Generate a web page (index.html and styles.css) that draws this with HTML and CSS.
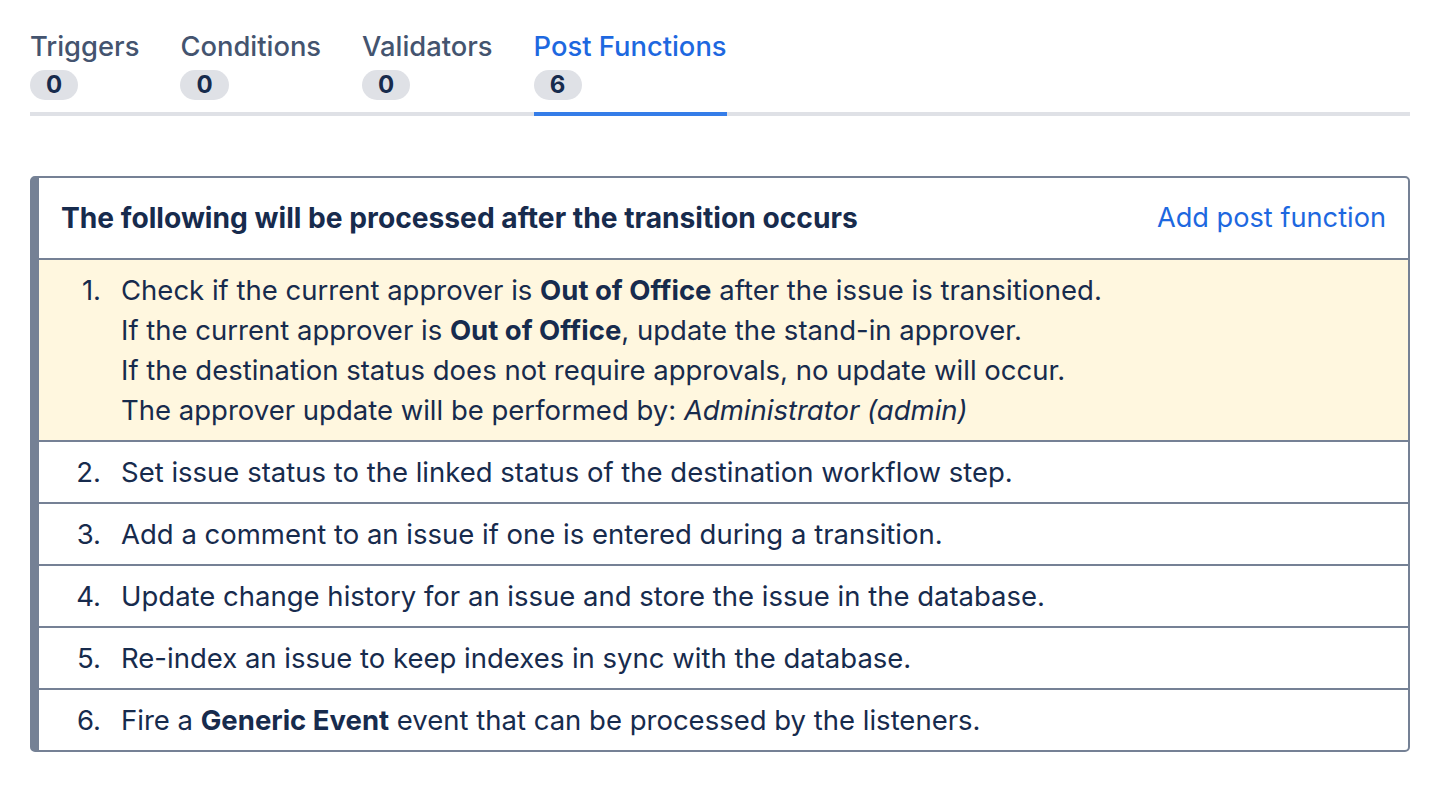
FILE: index.html
```
<!DOCTYPE html>
<html lang="en">
<head>
<meta charset="utf-8">
<title>Post Functions</title>
<link rel="stylesheet" href="styles.css">
</head>
<body>
<div class="page">
  <nav class="tabs">
    <div class="tab">
      <span class="tab-label">Triggers</span>
      <span class="badge">0</span>
    </div>
    <div class="tab">
      <span class="tab-label">Conditions</span>
      <span class="badge">0</span>
    </div>
    <div class="tab">
      <span class="tab-label">Validators</span>
      <span class="badge">0</span>
    </div>
    <div class="tab tab-active">
      <span class="tab-label">Post Functions</span>
      <span class="badge">6</span>
    </div>
  </nav>

  <section class="card">
    <header class="card-header">
      <h2 class="card-title">The following will be processed after the transition occurs</h2>
      <a class="card-link" href="#">Add post function</a>
    </header>
    <ol class="steps">
      <li class="step step-highlight">
        <span class="num">1.</span>
        <div class="text">
          Check if the current approver is <b>Out of Office</b> after the issue is transitioned.<br>
          If the current approver is <b>Out of Office</b>, update the stand-in approver.<br>
          If the destination status does not require approvals, no update will occur.<br>
          The approver update will be performed by: <i>Administrator (admin)</i>
        </div>
      </li>
      <li class="step">
        <span class="num">2.</span>
        <div class="text">Set issue status to the linked status of the destination workflow step.</div>
      </li>
      <li class="step">
        <span class="num">3.</span>
        <div class="text">Add a comment to an issue if one is entered during a transition.</div>
      </li>
      <li class="step">
        <span class="num">4.</span>
        <div class="text">Update change history for an issue and store the issue in the database.</div>
      </li>
      <li class="step">
        <span class="num">5.</span>
        <div class="text">Re-index an issue to keep indexes in sync with the database.</div>
      </li>
      <li class="step">
        <span class="num">6.</span>
        <div class="text">Fire a <b>Generic Event</b> event that can be processed by the listeners.</div>
      </li>
    </ol>
  </section>
</div>
</body>
</html>
```

FILE: styles.css
```
* { box-sizing: border-box; }

html, body {
  margin: 0;
  padding: 0;
  background: #ffffff;
}

body {
  font-family: Inter, "Noto Sans", "Liberation Sans", sans-serif;
  color: #172b4d;
  font-size: 27.5px;
  line-height: 40px;
}

.page {
  padding: 29px 26px 0 30px;
}

.tabs {
  display: flex;
  gap: 41px;
  border-bottom: 4px solid #dfe1e6;
}

.tab {
  display: flex;
  flex-direction: column;
  align-items: flex-start;
  padding-bottom: 12px;
  margin-bottom: -4px;
  border-bottom: 4px solid transparent;
}

.tab-label {
  font-size: 27.35px;
  line-height: 36px;
  font-weight: 500;
  color: #44546f;
  white-space: nowrap;
}

.tab-active {
  border-bottom-color: #357de8;
}

.tab-active .tab-label {
  color: #1d68e0;
}

.badge {
  margin-top: 5px;
  height: 30px;
  min-width: 48px;
  padding: 0 16px;
  border-radius: 15px;
  background: #dfe1e6;
  color: #172b4d;
  font-weight: 700;
  font-size: 24px;
  line-height: 30px;
  text-align: center;
}

.card {
  margin-top: 60px;
  border: 2px solid #758195;
  border-left-width: 9px;
  border-radius: 5px;
  overflow: hidden;
}

.card-header {
  display: flex;
  align-items: center;
  justify-content: space-between;
  height: 80px;
  padding: 0 22px 0 22px;
}

.card-title {
  margin: 0;
  font-size: 28.2px;
  font-weight: 700;
  line-height: 40px;
}

.card-link {
  color: #1d68e0;
  text-decoration: none;
  font-size: 27.2px;
}

.steps {
  list-style: none;
  margin: 0;
  padding: 0;
}

.step {
  display: flex;
  border-top: 2px solid #758195;
  padding: 10px 22px;
  line-height: 40px;
}

.step-highlight {
  background: #fff7df;
}

.num {
  flex: 0 0 40px;
  text-align: right;
  margin-right: 20px;
}

.text b {
  font-weight: 700;
}
```
